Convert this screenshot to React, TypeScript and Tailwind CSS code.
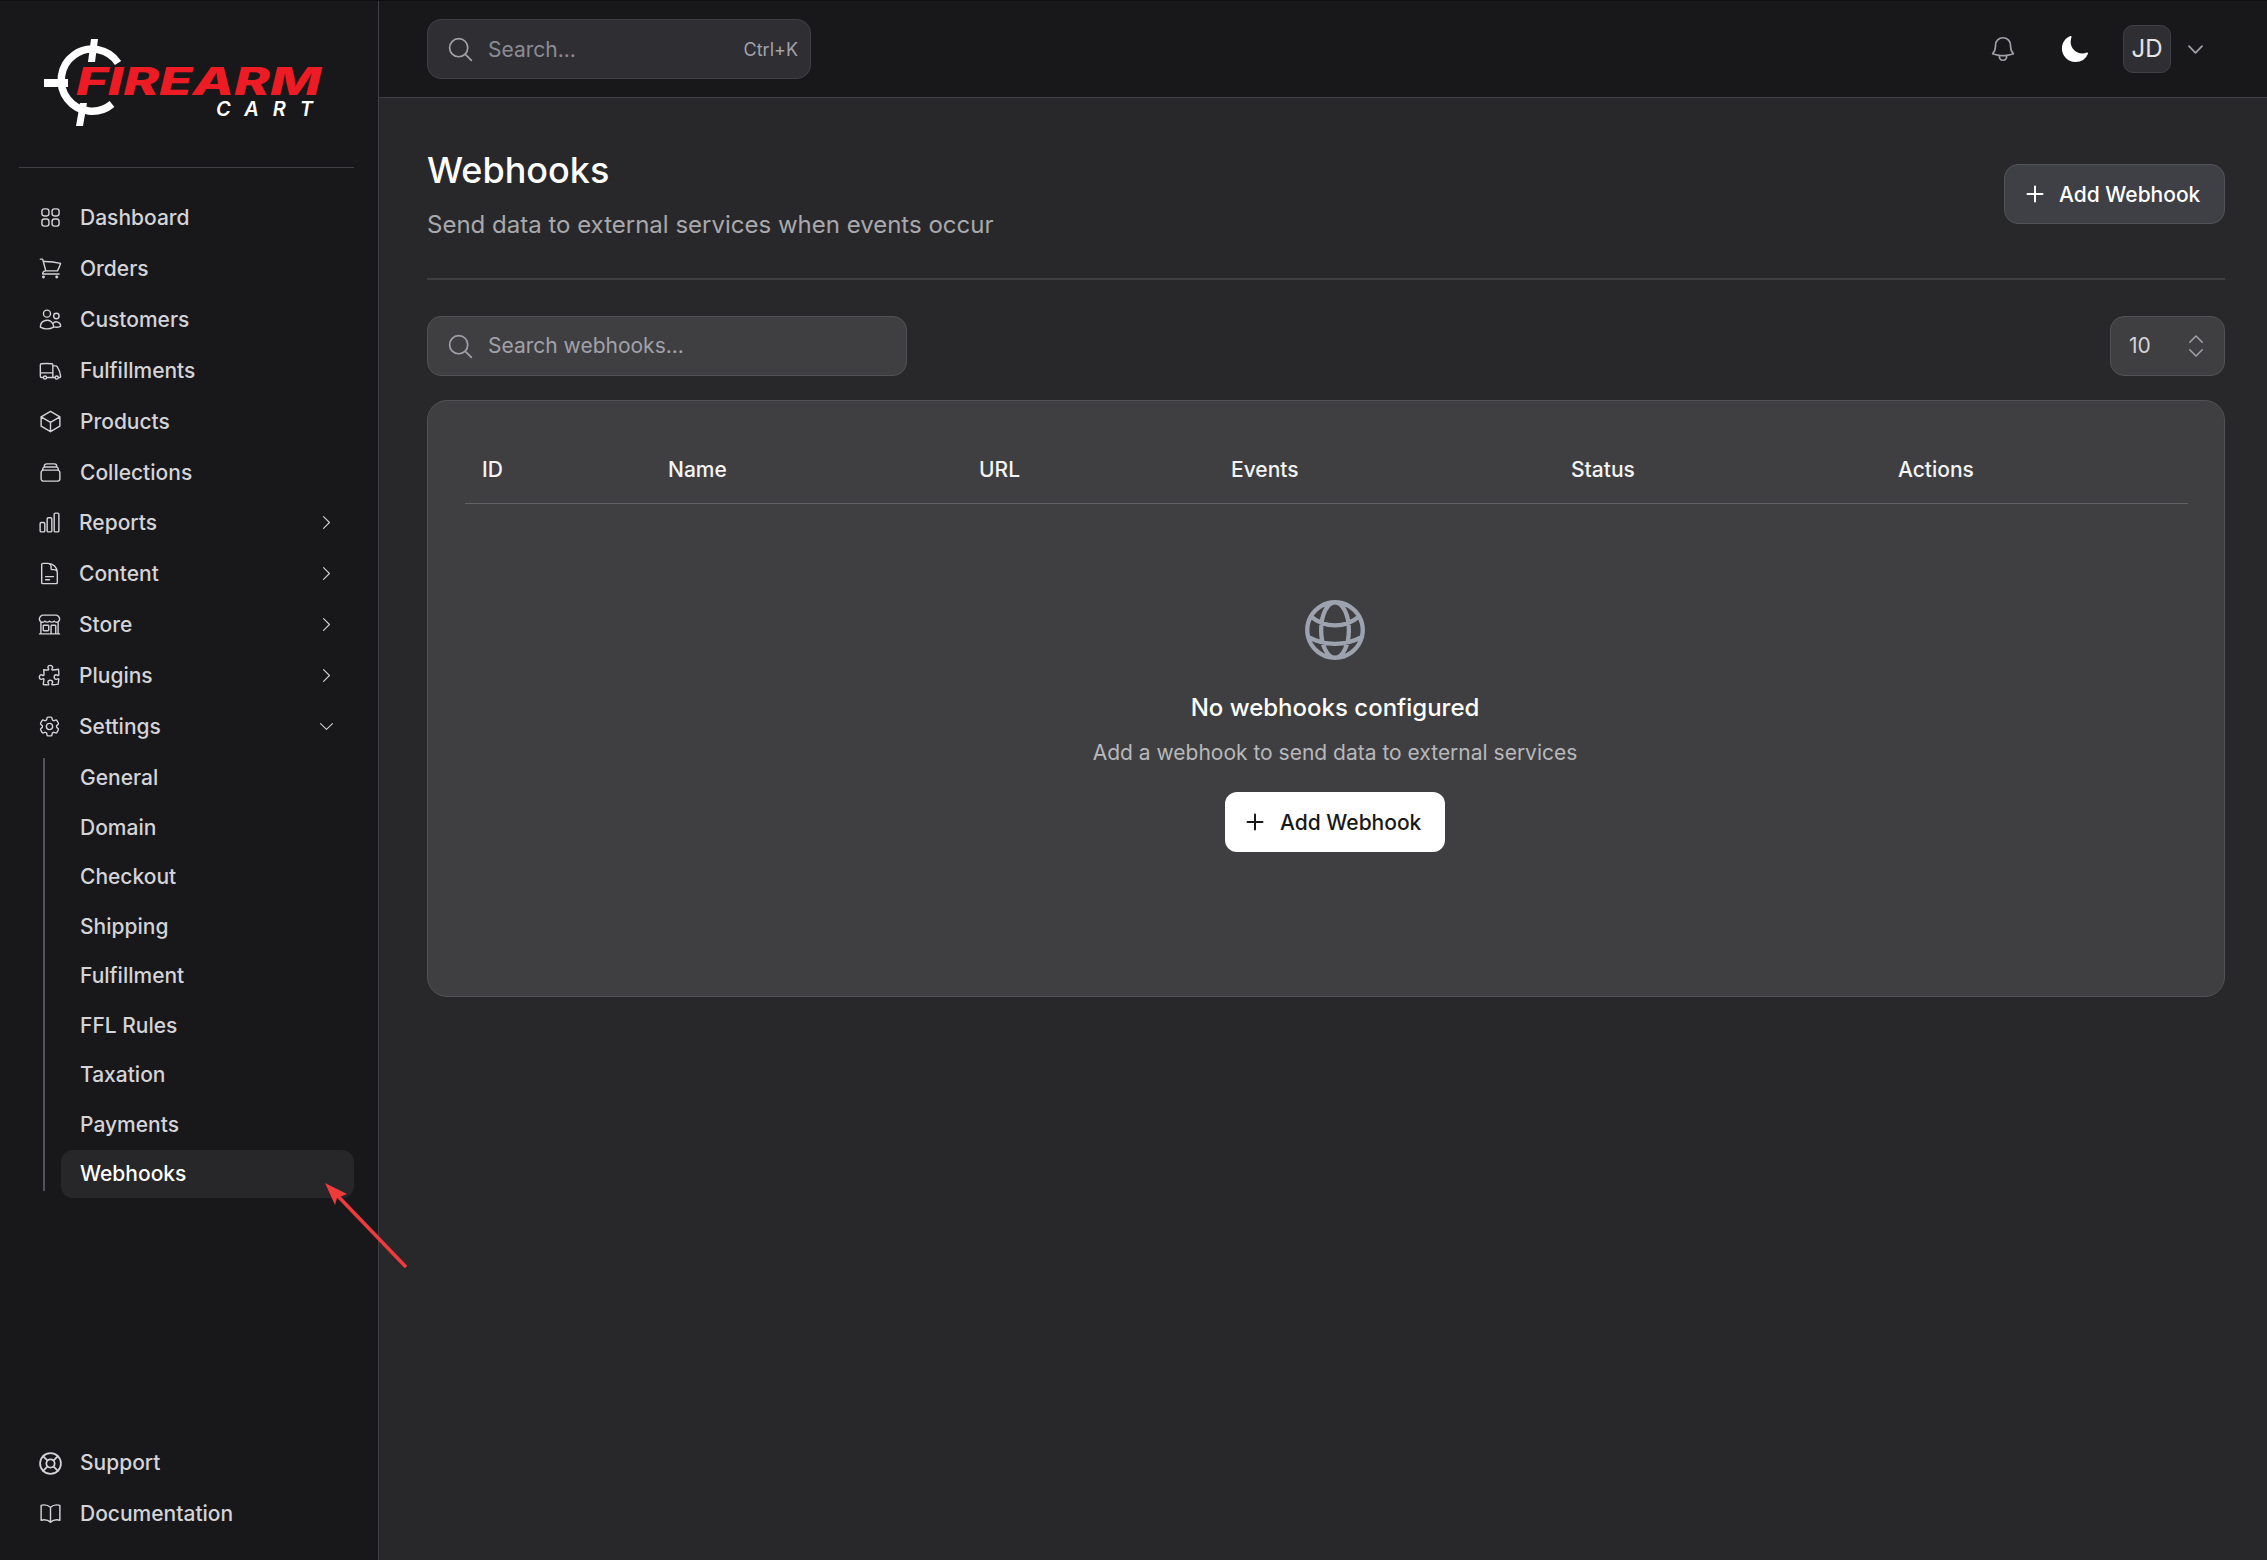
import type { ReactNode } from 'react'
import { ChevronsUpDown, LifeBuoy } from 'lucide-react'
import {
  HiMoon,
  HiOutlineBell,
  HiOutlineBookOpen,
  HiOutlineBuildingStorefront,
  HiOutlineChartBar,
  HiOutlineChevronDown,
  HiOutlineChevronRight,
  HiOutlineCog6Tooth,
  HiOutlineCube,
  HiOutlineDocumentText,
  HiOutlineGlobeAlt,
  HiOutlineMagnifyingGlass,
  HiOutlinePlus,
  HiOutlinePuzzlePiece,
  HiOutlineRectangleStack,
  HiOutlineShoppingCart,
  HiOutlineSquares2X2,
  HiOutlineTruck,
  HiOutlineUsers,
} from 'react-icons/hi2'

function Logo() {
  return (
    <svg viewBox="0 0 340 130" className="w-[340px] h-[130px]">
      <path d="M118 62A31 31 0 1 0 112 103" fill="none" stroke="#fff" strokeWidth="7.5" />
      <path d="M91 38h7l-3 23h-7zM44 78h24v8H44zM80 102h7l-4 23h-7z" fill="#fff" />
      <text x="76" y="94" textLength="245" lengthAdjust="spacingAndGlyphs" fontFamily="Inter, sans-serif" fontWeight="800" fontStyle="italic" fontSize="38" fill="#ed1c24">FIREARM</text>
      <text x="216" y="115" textLength="97" lengthAdjust="spacing" fontFamily="Inter, sans-serif" fontWeight="600" fontStyle="italic" fontSize="20" fill="#fff">CART</text>
    </svg>
  )
}

const iconClass = 'w-[25px] h-[25px] shrink-0'

const mainItems: { label: string; icon: ReactNode }[] = [
  { label: 'Dashboard', icon: <HiOutlineSquares2X2 strokeWidth={1.35} className={iconClass} /> },
  { label: 'Orders', icon: <HiOutlineShoppingCart strokeWidth={1.35} className={iconClass} /> },
  { label: 'Customers', icon: <HiOutlineUsers strokeWidth={1.35} className={iconClass} /> },
  { label: 'Fulfillments', icon: <HiOutlineTruck strokeWidth={1.35} className={iconClass} /> },
  { label: 'Products', icon: <HiOutlineCube strokeWidth={1.35} className={iconClass} /> },
  { label: 'Collections', icon: <HiOutlineRectangleStack strokeWidth={1.35} className={iconClass} /> },
]

const groupItems: { label: string; icon: ReactNode }[] = [
  { label: 'Reports', icon: <HiOutlineChartBar strokeWidth={1.35} className={iconClass} /> },
  { label: 'Content', icon: <HiOutlineDocumentText strokeWidth={1.35} className={iconClass} /> },
  { label: 'Store', icon: <HiOutlineBuildingStorefront strokeWidth={1.35} className={iconClass} /> },
  { label: 'Plugins', icon: <HiOutlinePuzzlePiece strokeWidth={1.35} className={iconClass} /> },
]

const settingsItems = ['General', 'Domain', 'Checkout', 'Shipping', 'Fulfillment', 'FFL Rules', 'Taxation', 'Payments', 'Webhooks']

const columns = ['ID', 'Name', 'URL', 'Events', 'Status', 'Actions']

function Sidebar() {
  return (
    <aside className="w-[379px] shrink-0 flex flex-col bg-[#18181b] border-r border-[#3f3f46] text-[#d4d4d8] text-[21px] font-medium">
      <div className="h-[166px] shrink-0">
        <Logo />
      </div>
      <div className="ml-[19px] mr-[24px] h-px shrink-0 bg-[#3f3f46]" />

      <nav className="pt-[24px] flex-1">
        {mainItems.map(item => (
          <a key={item.label} className="h-[51px] flex items-center pl-[37.5px] gap-[17.5px]">
            {item.icon}
            <span>{item.label}</span>
          </a>
        ))}
        <div className="-mt-[1px]">
          {groupItems.map(item => (
            <a key={item.label} className="h-[51px] flex items-center pl-[37px] pr-[42px] gap-[17px]">
              {item.icon}
              <span className="flex-1">{item.label}</span>
              <HiOutlineChevronRight strokeWidth={1.35} className="w-[19px] h-[19px]" />
            </a>
          ))}
          <a className="h-[51px] flex items-center pl-[37px] pr-[42px] gap-[17px]">
            <HiOutlineCog6Tooth strokeWidth={1.35} className={iconClass} />
            <span className="flex-1">Settings</span>
            <HiOutlineChevronDown strokeWidth={1.35} className="w-[19px] h-[19px]" />
          </a>
        </div>
        <div className="flex pl-[43px] pr-[24px] mt-[1px]">
          <div className="w-[2px] bg-[#52525b] mt-[5px] mb-[8px]" />
          <ul className="flex-1 ml-[16px]">
            {settingsItems.map(label => (
              <li key={label} className="h-[49.5px] flex items-center">
                <a className={label === 'Webhooks' ? 'w-full h-[48px] flex items-center pl-[19px] rounded-[12px] bg-[#27272a] text-white' : 'pl-[19px]'}>
                  {label}
                </a>
              </li>
            ))}
          </ul>
        </div>
      </nav>

      <div className="pb-[21px]">
        <a className="h-[50px] flex items-center pl-[37.5px] gap-[17.5px]">
          <LifeBuoy strokeWidth={1.7} className={iconClass} />
          <span>Support</span>
        </a>
        <a className="h-[51px] flex items-center pl-[37.5px] gap-[17.5px]">
          <HiOutlineBookOpen strokeWidth={1.35} className={iconClass} />
          <span>Documentation</span>
        </a>
      </div>
    </aside>
  )
}

function Header() {
  return (
    <header className="h-[97px] shrink-0 flex items-center justify-between pl-[48px] pr-[42px] bg-[#18181b] border-b border-[#3f3f46]">
      <div className="w-[384px] h-[60px] flex items-center pl-[18px] pr-[12px] rounded-[14px] bg-[#2f2f33] border-[1.5px] border-[#3f3f46]">
        <HiOutlineMagnifyingGlass strokeWidth={1.4} className="w-[29px] h-[29px] text-[#a1a1aa] shrink-0" />
        <input placeholder="Search..." className="ml-[13px] pt-[1px] flex-1 min-w-0 bg-transparent text-[21px] placeholder:text-[#8b8b93] outline-none" />
        <span className="text-[18px] text-[#a1a1aa]">Ctrl+K</span>
      </div>
      <div className="flex items-center">
        <HiOutlineBell strokeWidth={1.35} className="w-[30px] h-[30px] text-[#a1a1aa]" />
        <HiMoon className="ml-[41px] w-[31px] h-[31px] text-white" />
        <div className="ml-[33px] w-[48px] h-[48px] flex items-center justify-center rounded-[10px] bg-[#2f2f33] border-[1.5px] border-[#3f3f46] text-[24px] text-[#e4e4e7]">JD</div>
        <HiOutlineChevronDown strokeWidth={2} className="ml-[13.5px] mr-[19.5px] w-[21px] h-[21px] text-[#a1a1aa]" />
      </div>
    </header>
  )
}

function AddWebhookButton({ light }: { light?: boolean }) {
  return (
    <button className={light
      ? 'h-[60px] w-[220px] flex items-center pl-[18px] gap-[13px] rounded-[12px] bg-white text-[#18181b] text-[21px] font-medium'
      : 'h-[60px] w-[221px] flex items-center pl-[18px] gap-[12px] rounded-[14px] bg-[#3f3f46] border-[1.5px] border-[#52525b] text-white text-[21px] font-medium'}>
      <HiOutlinePlus strokeWidth={2} className="w-[24px] h-[24px]" />
      <span className="pt-[1px]">Add Webhook</span>
    </button>
  )
}

export default function App() {
  return (
    <div className="h-screen w-full overflow-hidden relative flex flex-col border-t border-[#0e0e10] bg-[#28282a]" style={{ fontFamily: 'Inter, sans-serif' }}>
      <div className="flex flex-1 min-h-0">
        <Sidebar />
        <div className="flex-1 min-w-0 flex flex-col">
          <Header />
          <main className="flex-1 pl-[48px] pr-[42px] pt-[48px]">
            <div className="flex items-center justify-between">
              <div>
                <h1 className="text-[36px] leading-[48px] font-medium text-white">Webhooks</h1>
                <p className="mt-[14px] text-[24px] leading-[34px] text-[#a8a8ad]">Send data to external services when events occur</p>
              </div>
              <AddWebhookButton />
            </div>
            <div className="mt-[36px] h-[2px] bg-[#3f3f41]" />

            <div className="mt-[36px] flex items-center justify-between">
              <div className="w-[480px] h-[60px] flex items-center pl-[18px] rounded-[14px] bg-[#3f3f41] border-[1.5px] border-[#525256]">
                <HiOutlineMagnifyingGlass strokeWidth={1.4} className="w-[29px] h-[29px] text-[#a1a1aa] shrink-0" />
                <input placeholder="Search webhooks..." className="ml-[13px] flex-1 min-w-0 bg-transparent text-[21px] placeholder:text-[#a1a1aa] outline-none" />
              </div>
              <div className="w-[115px] h-[60px] flex items-center justify-between pl-[18px] pr-[13px] rounded-[14px] bg-[#3f3f41] border-[1.5px] border-[#525256] text-[21px] text-[#d4d4d8]">
                10
                <ChevronsUpDown strokeWidth={1.2} className="w-[30px] h-[30px] text-[#a1a1aa]" />
              </div>
            </div>

            <section className="mt-[24px] h-[597px] pl-[37px] pr-[36px] rounded-[20px] bg-[#3f3f41] border-[1.5px] border-[#525256]">
              <div className="h-[103px] pt-[35px] grid grid-cols-[186px_311px_252px_340px_327px_306px] items-center border-b border-[#636367] text-[21px] font-medium text-[#f4f4f5]">
                {columns.map(col => (
                  <div key={col} className="pl-[17px]">{col}</div>
                ))}
              </div>
              <div className="flex flex-col items-center pt-[89px] pl-[17px]">
                <HiOutlineGlobeAlt strokeWidth={1.4} className="w-[74px] h-[74px] text-[#9ca3af]" />
                <h2 className="mt-[24px] text-[24px] leading-[34px] font-medium text-white">No webhooks configured</h2>
                <p className="mt-[13px] text-[21px] leading-[30px] text-[#b8b8bb]">Add a webhook to send data to external services</p>
                <div className="mt-[24px]">
                  <AddWebhookButton light />
                </div>
              </div>
            </section>
          </main>
        </div>
      </div>

      {/* annotation arrow */}
      <svg className="absolute left-0 top-0 w-[420px] h-[1280px] pointer-events-none" viewBox="0 0 420 1280" fill="none">
        <path d="M406 1266 333 1190" stroke="#ef3b3b" strokeWidth="3.5" />
        <path d="M325 1182 347 1193 337 1197 335 1204z" fill="#ef3b3b" />
      </svg>
    </div>
  )
}
